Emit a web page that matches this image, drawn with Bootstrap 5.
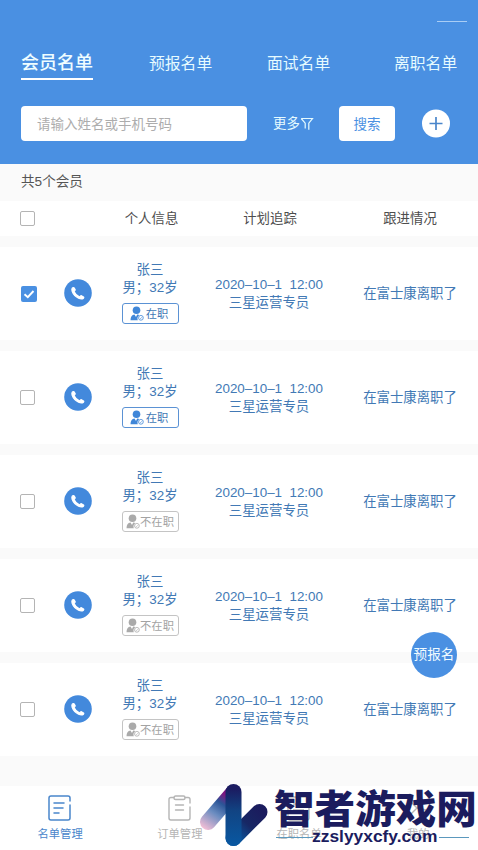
<!DOCTYPE html>
<html lang="zh-CN">
<head>
<meta charset="utf-8">
<meta name="viewport" content="width=device-width, initial-scale=1">
<title>会员名单</title>
<link href="https://cdn.jsdelivr.net/npm/bootstrap@5.3.0/dist/css/bootstrap.min.css" rel="stylesheet">
<style>
:root{--blue:#4a90e2;--ink:#4279b5}
body{font-family:"Liberation Sans","Noto Sans CJK SC",sans-serif;background:#fafafa;width:478px;height:850px;overflow:hidden;font-size:13.4px;line-height:18px}
svg{display:block;flex:none}
.top{background:var(--blue);height:164px;padding:21px 0 0 21px}
.dash{width:30px;height:1px;background:#a9cdf5;margin-left:416px}
.tabs{height:36px;margin-top:26px;color:#e6fbff}
.tab-item{font-size:15.8px;line-height:32px;white-space:nowrap;width:63px}
.tab-item.current{font-size:18px;font-weight:500;width:72px;height:32px;line-height:31px;border-bottom:2px solid #fff;color:#effdff}
.m1{margin-left:56px}.m2{margin-left:55px}.m3{margin-left:64px}
.tools{margin-top:22px;height:35px}
.search-box{width:226px;height:35px;border-radius:4px;padding:1px 16px 0;font-size:13.5px;color:#adadad}
.search-box::placeholder{color:#adadad;opacity:1}
.more{margin-left:26px;width:66px;color:#e6fbff}
.btn-find{width:56px;height:35px;border-radius:4px;color:var(--blue);font-size:13.5px;padding:3px 0 0}
.plus{margin-left:27px}
.total{height:37px;padding:0 21px;color:#555;font-size:13.6px;padding-bottom:2px}
.line{display:grid;grid-template-columns:56px 44px 100px 138px 144px;align-items:center;background:#fff;margin-bottom:11px;text-align:center;width:478px;white-space:nowrap}
.heads{height:35px;color:#4d4d4d}
.heads .h1x{padding-left:3px}.heads .h2x{padding-left:2px}
.member{height:93px;color:var(--ink)}
.cb{width:15px;height:15px;border:1.3px solid #b4b4b4;border-radius:2px;margin-left:20px;background:#fff}
.cb.on{width:16px;height:16px;border:0;background:var(--blue);margin-left:21px;margin-top:1px}
.phone{margin-left:8px;margin-bottom:1px}
.info{margin-top:-2px}
.tag{width:57px;height:21px;border:1.3px solid #5b92d4;border-radius:3px;font-size:11.3px;line-height:18px;margin:6px auto 0;color:#3f78b5}
.tag span{margin-left:2px;margin-right:2px}
.tag.off{border-color:#c4c4c4;color:#a3a3a3}
.tag.off span{margin:0}
.float-btn{position:absolute;left:411px;top:632px;width:46px;height:46px;background:var(--blue);color:#f0fbff;font-size:13.6px}
.bottom{height:64px;margin-top:30px;background:#fff;position:relative}
.bottom .cell{width:119.3px;padding-top:9px;font-size:11.3px;line-height:17px;color:#b5b5b5}
.bottom .cell.now{width:120.3px;color:#4a86cb}
.bottom .cell svg{margin:0 auto 5px}
.brand{position:absolute;left:199px;top:-2px;width:279px;height:66px}
.brand svg{position:absolute;left:0;top:0}
.brand-name{position:absolute;left:75px;top:1px;font:900 40.6px/44px "Noto Sans CJK SC",sans-serif;color:#1b1c5e;white-space:nowrap;transform:scaleY(.95)}
.brand-url{position:absolute;left:113px;top:42px;font:bold 17.4px/20px "Liberation Sans",sans-serif;color:#1b1c5e;white-space:nowrap}
</style>
</head>
<body>
<svg width="0" height="0" class="position-absolute">
<defs>
<symbol id="call" viewBox="0 0 28 28"><circle cx="14" cy="14" r="13.8" fill="#4389dc"/><path d="M8.3 9.2Q9.300 8 10.200 9L11.200 10.800Q11.400 11.300 10 12.500Q11.800 16.600 15.700 18Q16.700 16.400 17.400 16.800L19.500 18.100Q20.100 18.600 19.200 19.400Q17.500 20.500 14.600 19.200Q9.700 16.800 8.100 12.100Q7.600 10.200 8.300 9.200Z" fill="#fff" stroke="#fff" stroke-width="1.300" stroke-linejoin="round"/></symbol>
<symbol id="person" viewBox="0 0 14 15"><circle cx="6.500" cy="4.200" r="3.800" fill="currentColor"/><path d="M.5 14.300Q.5 8.900 4.500 8.500L6 11L7.200 8.500Q9 8.600 9.200 9.200Q6.700 11.300 7.800 14.300Z" fill="currentColor"/><circle cx="10.900" cy="11.800" r="2.400" fill="none" stroke="currentColor" stroke-width=".8"/><path d="M9.800 11.800l.8.800 1.500-1.500" fill="none" stroke="currentColor" stroke-width=".6"/></symbol>
</defs>
</svg>
<header class="top">
  <div class="dash"></div>
  <nav class="tabs d-flex">
    <div class="tab-item current">会员名单</div>
    <div class="tab-item m1">预报名单</div>
    <div class="tab-item m2">面试名单</div>
    <div class="tab-item m3">离职名单</div>
  </nav>
  <div class="tools d-flex align-items-center">
    <input class="search-box form-control border-0" placeholder="请输入姓名或手机号码">
    <div class="more d-flex align-items-center">更多<svg width="14" height="14" viewBox="0 0 14 14"><path d="M1.200 1.500H12.500L8.800 6.200V12.800M1.200 1.500L5.200 6.200V11.500" fill="none" stroke="#e6fbff" stroke-width="1.200"/></svg></div>
    <button class="btn btn-light bg-white border-0 btn-find">搜索</button>
    <svg class="plus" width="29" height="29" viewBox="0 0 29 29"><circle cx="14" cy="14.500" r="14" fill="#fff"/><path d="M7.500 14.500H20.500M14 8V21" stroke="#4a86cb" stroke-width="1.700"/></svg>
  </div>
</header>
<main>
  <div class="total d-flex align-items-center">共5个会员</div>
  <div class="line heads"><span class="cb"></span><span></span><span class="h1x">个人信息</span><span class="h2x">计划追踪</span><span>跟进情况</span></div>
  <div id="members"></div>
</main>
<footer class="bottom d-flex text-center">
  <div class="cell now"><svg width="24" height="26" viewBox="0 0 24 26" fill="none" stroke="currentColor" stroke-width="1.500" stroke-linecap="round"><path d="M22 6V3Q22 1 20 1H3Q1 1 1 3V23Q1 25 3 25H20Q22 25 22 23V10"/><path d="M6 8H16M6 13H15M6 18H11"/></svg>名单管理</div>
  <div class="cell"><svg width="24" height="26" viewBox="0 0 24 26" fill="none" stroke="currentColor" stroke-width="1.400" stroke-linecap="round"><path d="M6 2.500H3Q1 2.500 1 4.500V23Q1 25 3 25H20Q22 25 22 23V12M22 8V4.500Q22 2.500 20 2.500H17"/><rect x="6" y="1" width="11" height="3.500" rx="1.500"/><path d="M7.500 10H15.500M7.500 15H15.500"/></svg>订单管理</div>
  <div class="cell"><svg width="24" height="26" viewBox="0 0 24 26" fill="none" stroke="currentColor" stroke-width="1.400"><rect x="1" y="2" width="21" height="23" rx="2"/><path d="M6 9H17M6 15H17"/></svg>在职名单</div>
  <div class="cell"><svg width="24" height="26" viewBox="0 0 24 26" fill="none" stroke="currentColor" stroke-width="1.400"><path d="M4 6L11 13L18 7M11 13L4 20M11 13L20 15"/></svg>我的</div>
  <div class="brand">
    <svg width="279" height="66" viewBox="0 0 279 66">
      <defs><linearGradient id="ga" x1="35" y1="8" x2="8" y2="47" gradientUnits="userSpaceOnUse"><stop offset="0" stop-color="#69157c"/><stop offset=".15" stop-color="#801580"/><stop offset=".35" stop-color="#2b5597"/><stop offset=".6" stop-color="#6a8cc0"/><stop offset="1" stop-color="#f4bfd6"/></linearGradient>
      <linearGradient id="gb" x1="0" y1="5" x2="0" y2="60" gradientUnits="userSpaceOnUse"><stop stop-color="#1b1c61"/><stop offset=".4" stop-color="#114483"/><stop offset="1" stop-color="#0957a0"/></linearGradient>
      <linearGradient id="gc" x1="60" y1="25" x2="34" y2="52" gradientUnits="userSpaceOnUse"><stop stop-color="#1b1c5e"/><stop offset=".5" stop-color="#172764"/><stop offset="1" stop-color="#0957a0"/></linearGradient></defs>
      <g fill="none" stroke-width="16" stroke-linecap="round"><path d="M9 38L34 9" stroke="url(#ga)"/><path d="M34.500 54L60.500 28" stroke="url(#gc)"/></g>
      <rect x="26.500" y="0" width="16" height="62" rx="8" fill="url(#gb)"/>
      <path d="M77 53.500H114M240 53.500H270" stroke="#5b98bd" stroke-width="1"/>
    </svg>
    <div class="brand-name">智者游戏网</div>
    <div class="brand-url">zzslyyxcfy.com</div>
  </div>
</footer>
<div class="float-btn rounded-circle d-flex align-items-center justify-content-center">预报名</div>
<script src="https://cdn.jsdelivr.net/npm/bootstrap@5.3.0/dist/js/bootstrap.bundle.min.js"></script>
<script>
const members=[[true,true],[false,true],[false,false],[false,false],[false,false]];
document.getElementById('members').innerHTML=members.map(([checked,employed])=>`
<div class="line member">
  <span class="cb ${checked?'on':''}">${checked?'<svg width="16" height="16" viewBox="0 0 16 16"><path d="M3.500 8.200L6.800 11.200L12.500 5" fill="none" stroke="#fff" stroke-width="1.900"/></svg>':''}</span>
  <svg class="phone" width="28" height="28"><use href="#call"/></svg>
  <div class="info"><div>张三</div><div>男；32岁</div>
    <div class="tag ${employed?'':'off'} d-flex align-items-center justify-content-center"><svg width="14" height="15" style="color:${employed?'#3f86d8':'#aaa'}"><use href="#person"/></svg><span>${employed?'在职':'不在职'}</span></div></div>
  <div>2020–10–1&nbsp; 12:00<br>三星运营专员</div>
  <div>在富士康离职了</div>
</div>`).join('');
</script>
</body>
</html>
